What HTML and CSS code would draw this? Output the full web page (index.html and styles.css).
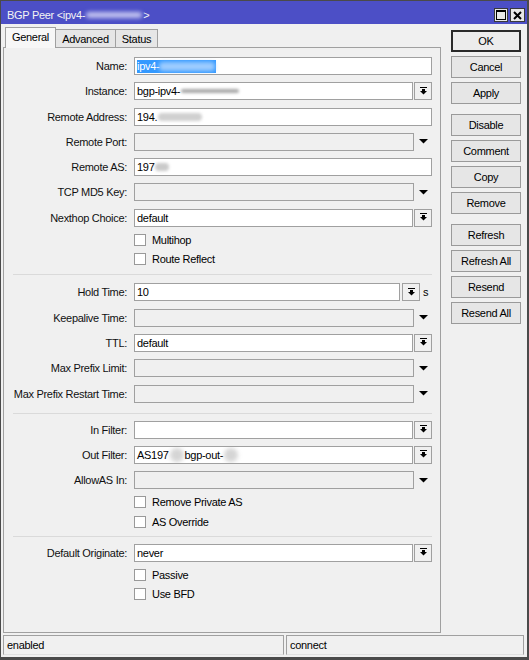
FILE: index.html
```html
<!DOCTYPE html>
<html>
<head>
<meta charset="utf-8">
<link rel="stylesheet" href="styles.css">
</head>
<body>
<div class="window">
  <div class="titlebar">
    <span class="title">BGP Peer &lt;ipv4-<span class="smudge tsm"></span>&gt;</span>
    <div class="wbtns">
      <span class="wbtn max"><svg width="10" height="10" viewBox="0 0 10 10"><rect x="0.5" y="0.5" width="9" height="9" fill="none" stroke="#000"/><rect x="0" y="0" width="10" height="2" fill="#000"/></svg></span>
      <span class="wbtn close"><svg width="9" height="9" viewBox="0 0 9 9"><path d="M1 1 L8 8 M8 1 L1 8" stroke="#000" stroke-width="2" fill="none"/></svg></span>
    </div>
  </div>
  <div class="main">
    <div class="left">
      <div class="tabs">
        <div class="tab active">General</div>
        <div class="tab t-adv">Advanced</div>
        <div class="tab t-st">Status</div>
      </div>
      <div class="panel">
        <div class="section first">
          <div class="row"><span class="lbl">Name:</span><div class="field"><div class="input"><span class="sel">ipv4-<span class="smudge bsm"></span></span></div></div></div>
          <div class="row"><span class="lbl">Instance:</span><div class="field"><div class="input">bgp-ipv4-<span class="smudge gsm w60"></span></div><span class="ddbtn"><svg width="9" height="9" viewBox="0 0 9 9"><rect x="1" y="0" width="7" height="1"/><rect x="3" y="2" width="3" height="2"/><polygon points="1,4 8,4 4.5,7.5"/></svg></span></div></div>
          <div class="row"><span class="lbl">Remote Address:</span><div class="field"><div class="input">194.<span class="smudge gsm w44"></span></div></div></div>
          <div class="row"><span class="lbl">Remote Port:</span><div class="field"><div class="input dis"></div><span class="arrow"><svg width="9" height="5" viewBox="0 0 9 5"><polygon points="0,0 9,0 4.5,4.5"/></svg></span></div></div>
          <div class="row"><span class="lbl">Remote AS:</span><div class="field"><div class="input">197<span class="smudge gsm w14"></span></div></div></div>
          <div class="row"><span class="lbl">TCP MD5 Key:</span><div class="field"><div class="input dis"></div><span class="arrow"><svg width="9" height="5" viewBox="0 0 9 5"><polygon points="0,0 9,0 4.5,4.5"/></svg></span></div></div>
          <div class="row"><span class="lbl">Nexthop Choice:</span><div class="field"><div class="input">default</div><span class="ddbtn"><svg width="9" height="9" viewBox="0 0 9 9"><rect x="1" y="0" width="7" height="1"/><rect x="3" y="2" width="3" height="2"/><polygon points="1,4 8,4 4.5,7.5"/></svg></span></div></div>
          <div class="check"><span class="box"></span><span class="ctext">Multihop</span></div>
          <div class="check"><span class="box"></span><span class="ctext">Route Reflect</span></div>
        </div>
        <div class="sep"></div>
        <div class="section s2">
          <div class="row"><span class="lbl">Hold Time:</span><div class="field"><div class="input">10</div><span class="ddbtn wide"><svg width="9" height="9" viewBox="0 0 9 9"><rect x="1" y="0" width="7" height="1"/><rect x="3" y="2" width="3" height="2"/><polygon points="1,4 8,4 4.5,7.5"/></svg></span><span class="unit">s</span></div></div>
          <div class="row"><span class="lbl">Keepalive Time:</span><div class="field"><div class="input dis"></div><span class="arrow"><svg width="9" height="5" viewBox="0 0 9 5"><polygon points="0,0 9,0 4.5,4.5"/></svg></span></div></div>
          <div class="row"><span class="lbl">TTL:</span><div class="field"><div class="input">default</div><span class="ddbtn"><svg width="9" height="9" viewBox="0 0 9 9"><rect x="1" y="0" width="7" height="1"/><rect x="3" y="2" width="3" height="2"/><polygon points="1,4 8,4 4.5,7.5"/></svg></span></div></div>
          <div class="row"><span class="lbl">Max Prefix Limit:</span><div class="field"><div class="input dis"></div><span class="arrow"><svg width="9" height="5" viewBox="0 0 9 5"><polygon points="0,0 9,0 4.5,4.5"/></svg></span></div></div>
          <div class="row"><span class="lbl">Max Prefix Restart Time:</span><div class="field"><div class="input dis"></div><span class="arrow"><svg width="9" height="5" viewBox="0 0 9 5"><polygon points="0,0 9,0 4.5,4.5"/></svg></span></div></div>
        </div>
        <div class="sep"></div>
        <div class="section s3">
          <div class="row"><span class="lbl">In Filter:</span><div class="field"><div class="input"></div><span class="ddbtn"><svg width="9" height="9" viewBox="0 0 9 9"><rect x="1" y="0" width="7" height="1"/><rect x="3" y="2" width="3" height="2"/><polygon points="1,4 8,4 4.5,7.5"/></svg></span></div></div>
          <div class="row"><span class="lbl">Out Filter:</span><div class="field"><div class="input">AS197<span class="smudge blob"></span>bgp-out-<span class="smudge blob"></span></div><span class="ddbtn"><svg width="9" height="9" viewBox="0 0 9 9"><rect x="1" y="0" width="7" height="1"/><rect x="3" y="2" width="3" height="2"/><polygon points="1,4 8,4 4.5,7.5"/></svg></span></div></div>
          <div class="row"><span class="lbl">AllowAS In:</span><div class="field"><div class="input dis"></div><span class="arrow"><svg width="9" height="5" viewBox="0 0 9 5"><polygon points="0,0 9,0 4.5,4.5"/></svg></span></div></div>
          <div class="check"><span class="box"></span><span class="ctext">Remove Private AS</span></div>
          <div class="check"><span class="box"></span><span class="ctext">AS Override</span></div>
        </div>
        <div class="sep"></div>
        <div class="section s4">
          <div class="row"><span class="lbl">Default Originate:</span><div class="field"><div class="input">never</div><span class="ddbtn"><svg width="9" height="9" viewBox="0 0 9 9"><rect x="1" y="0" width="7" height="1"/><rect x="3" y="2" width="3" height="2"/><polygon points="1,4 8,4 4.5,7.5"/></svg></span></div></div>
          <div class="check"><span class="box"></span><span class="ctext">Passive</span></div>
          <div class="check"><span class="box"></span><span class="ctext">Use BFD</span></div>
        </div>
      </div>
    </div>
    <div class="buttons">
      <div class="btn ok">OK</div>
      <div class="btn">Cancel</div>
      <div class="btn">Apply</div>
      <div class="btn grp">Disable</div>
      <div class="btn">Comment</div>
      <div class="btn">Copy</div>
      <div class="btn">Remove</div>
      <div class="btn grp">Refresh</div>
      <div class="btn">Refresh All</div>
      <div class="btn">Resend</div>
      <div class="btn">Resend All</div>
    </div>
  </div>
  <div class="status">
    <div class="cell c1">enabled</div>
    <div class="cell c2">connect</div>
  </div>
</div>
</body>
</html>
```
FILE: styles.css
```css
* { box-sizing: border-box; }
body {
  margin: 0;
  background: #f0f0f0;
  font-family: "Liberation Sans", Arial, sans-serif;
  font-size: 11px;
  letter-spacing: -0.3px;
  color: #000;
}
.window {
  width: 529px;
  height: 660px;
  background: #f0f0f0;
  border-style: solid;
  border-color: #4a4a4a;
  border-width: 1px 2px 3px 1px;
  display: flex;
  flex-direction: column;
}
.titlebar {
  height: 23px;
  background: #4c4fc6;
  display: flex;
  align-items: center;
  justify-content: space-between;
  padding: 5px 2px 0 6px;
  color: #f4f4f4;
}
.title { white-space: nowrap; display: flex; align-items: center; }
.smudge { display: inline-block; border-radius: 4px; }
.tsm { width: 56px; height: 6px; background: rgba(235, 235, 255, 0.75); filter: blur(2px); margin: 0 1px; }
.wbtns { display: flex; gap: 2px; }
.wbtn {
  height: 14px;
  background: #e8e8e8;
  border: 1px solid #3a3a3a;
  display: flex;
  align-items: center;
  justify-content: center;
}
.wbtn.max { width: 14px; }
.wbtn.close { width: 15px; }
.main {
  display: flex;
  height: 609px;
  padding-left: 2px;
}
.left {
  width: 438px;
  display: flex;
  flex-direction: column;
}
.tabs {
  height: 23px;
  display: flex;
  align-items: flex-end;
  padding-left: 2px;
  position: relative;
  z-index: 1;
}
.tab {
  height: 18px;
  border: 1px solid #a0a0a0;
  border-bottom: none;
  background: #e6e6e6;
  display: flex;
  align-items: center;
  justify-content: center;
}
.tab.active {
  width: 51px;
  height: 21px;
  margin-bottom: -1px;
  background: #f7f7f7;
  padding-bottom: 2px;
}
.t-adv { width: 60px; border-left: none; }
.t-st { width: 42px; border-left: none; }
.panel {
  flex: 1;
  border: 1px solid #a0a0a0;
  padding-top: 0;
}
.section {
  display: flex;
  flex-direction: column;
  gap: 7.3px;
  padding: 8px 8px 9px 0;
}
.section.first { padding-top: 9px; }
.section.s2 { padding-bottom: 10px; }
.section.s3 { padding-top: 7px; padding-bottom: 8px; }
.section.s4 { padding-top: 7px; }
.sep {
  height: 1px;
  background: #dadada;
  margin: 0 8px 0 9px;
}
.row {
  display: grid;
  grid-template-columns: 123px 1fr;
  column-gap: 7px;
  height: 18px;
  align-items: center;
}
.lbl { text-align: right; white-space: nowrap; color: #111; }
.field { display: flex; height: 18px; }
.input {
  flex: 1;
  border: 1px solid #a0a0a0;
  background: #fff;
  padding-left: 2px;
  display: flex;
  align-items: center;
  overflow: hidden;
  white-space: nowrap;
}
.input.dis { background: #f0f0f0; }
.sel {
  background: #3399ff;
  color: #fff;
  width: 79px;
  height: 13px;
  display: flex;
  align-items: center;
}
.bsm { width: 56px; height: 9px; background: rgba(170, 210, 255, 0.9); filter: blur(2px); }
.gsm { height: 4px; background: rgba(110, 110, 110, 0.6); filter: blur(1.5px); margin-left: 1px; }
.w60 { width: 58px; }
.w44 { width: 44px; height: 8px; background: rgba(150, 150, 150, 0.45); }
.w14 { width: 14px; height: 8px; background: rgba(150, 150, 150, 0.5); }
.blob { width: 14px; height: 14px; border-radius: 7px; background: rgba(150, 150, 150, 0.4); filter: blur(2px); margin: 0 1px; }
.ddbtn {
  width: 18px;
  margin-left: 1px;
  border: 1px solid #a0a0a0;
  background: #f0f0f0;
  display: flex;
  align-items: center;
  justify-content: center;
}
.ddbtn.wide { margin-left: 2px; }
.ddbtn svg { fill: #000; }
.arrow {
  width: 18px;
  display: flex;
  align-items: center;
  justify-content: center;
}
.arrow svg { fill: #000; }
.unit {
  width: 12px;
  padding-left: 3px;
  display: flex;
  align-items: center;
}
.check {
  display: flex;
  align-items: center;
  height: 12px;
  margin-left: 130px;
}
.box {
  width: 12px;
  height: 12px;
  border: 1px solid #999;
  background: #fff;
}
.ctext { margin-left: 6px; white-space: nowrap; }
.buttons {
  margin-left: 10px;
  width: 70px;
  padding-top: 6px;
  display: flex;
  flex-direction: column;
  gap: 4px;
}
.btn {
  height: 22px;
  border: 1px solid #9a9a9a;
  background: #e6e6e6;
  display: flex;
  align-items: center;
  justify-content: center;
  white-space: nowrap;
}
.btn.ok { border: 2px solid #2a2a2a; background: #ececec; }
.btn.grp { margin-top: 6px; }
.status {
  margin-top: 2px;
  height: 20px;
  display: flex;
  gap: 2px;
  padding-left: 2px;
}
.cell {
  height: 20px;
  border: 1px solid #a0a0a0;
  border-bottom-color: #e0e0e0;
  border-right-color: #a0a0a0;
  padding-left: 3px;
  display: flex;
  align-items: center;
}
.c1 { width: 281px; }
.c2 { width: 238px; }
```
